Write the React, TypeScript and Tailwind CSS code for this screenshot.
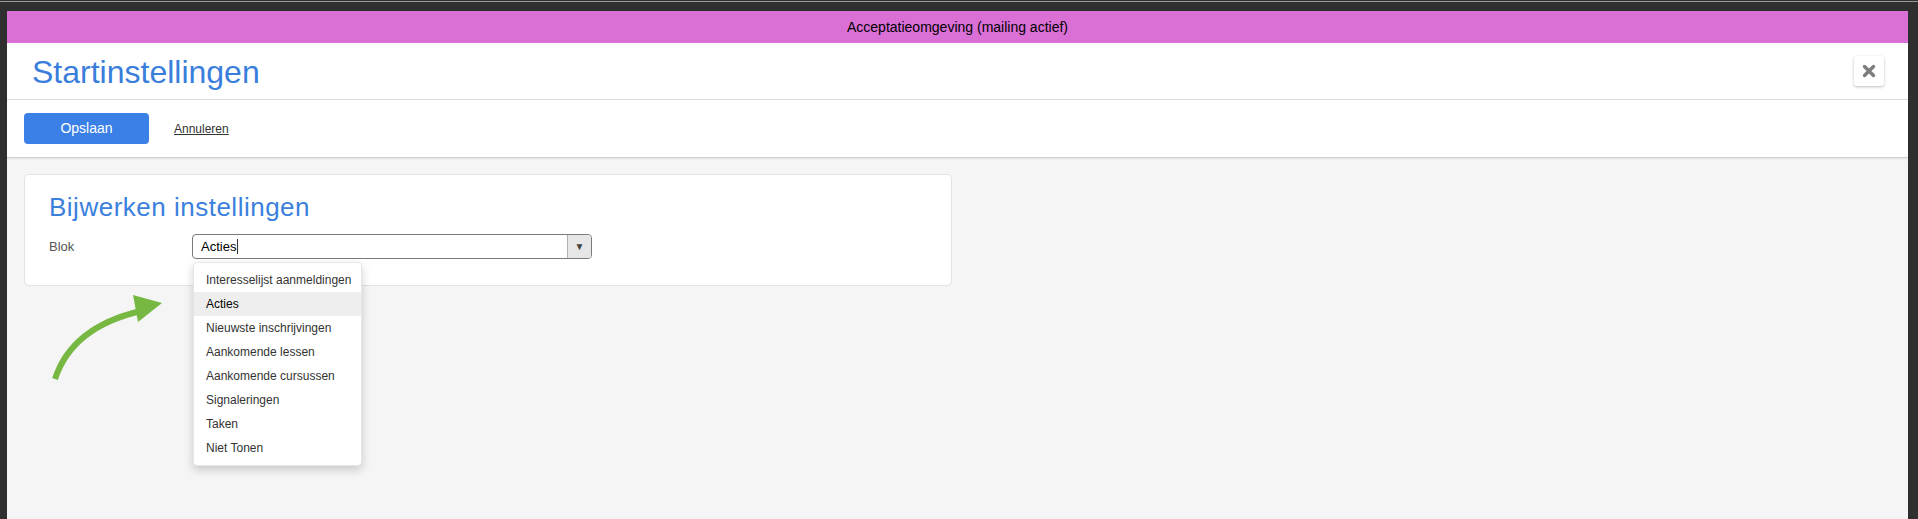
export default function App() {
  const options = [
    "Interesselijst aanmeldingen",
    "Acties",
    "Nieuwste inschrijvingen",
    "Aankomende lessen",
    "Aankomende cursussen",
    "Signaleringen",
    "Taken",
    "Niet Tonen",
  ];
  const selected = "Acties";

  return (
    <div
      className="relative h-[519px] w-full overflow-hidden bg-[#2f2f2f] pt-[1px] pl-[7px] pr-[10px]"
      style={{ fontFamily: '"Liberation Sans", Arial, Helvetica, sans-serif' }}
    >
      {/* top hairline of the window */}
      <div className="-ml-[7px] -mr-[10px] h-[1px] bg-[#9a9a9a]" />

      {/* page frame */}
      <div className="mt-[9px] flex h-[508px] flex-col bg-[#f5f5f5]">
        {/* environment banner */}
        <div className="flex h-[32px] items-center justify-center bg-[#da70d6] text-[14px] text-black">
          Acceptatieomgeving (mailing actief)
        </div>

        {/* header */}
        <div className="flex h-[57px] items-center justify-between border-b border-[#dcdcdc] bg-white pl-[25px] pr-[24px]">
          <h1 className="pt-[2px] text-[32px] leading-none text-[#3a7edc]">
            Startinstellingen
          </h1>
          <button className="flex h-[30px] w-[30px] items-center justify-center rounded-[3px] bg-white shadow-[0_1px_3px_rgba(0,0,0,0.25)]">
            <svg width="14" height="14" viewBox="0 0 14 14">
              <path
                d="M2.5 2.5 L11.5 11.5 M11.5 2.5 L2.5 11.5"
                stroke="#7d7d7d"
                strokeWidth="3.4"
                strokeLinecap="round"
              />
            </svg>
          </button>
        </div>

        {/* toolbar */}
        <div className="flex h-[58px] items-center border-b border-[#d0d0d0] bg-white pl-[17px] shadow-[0_1px_2px_rgba(0,0,0,0.08)]">
          <button className="h-[31px] w-[125px] rounded-[4px] bg-[#3a80e6] text-[14px] text-white">
            Opslaan
          </button>
          <a className="ml-[25px] text-[12px] text-[#333] underline">
            Annuleren
          </a>
        </div>

        {/* content */}
        <div className="flex-1 pl-[17px] pt-[16px]">
          <div className="w-[928px] rounded-[5px] border border-[#e2e2e2] bg-white px-[24px] pt-[19px] pb-[26px]">
            <h2 className="text-[26px] leading-none tracking-[0.5px] text-[#3b80dc]">
              Bijwerken instellingen
            </h2>
            <div className="mt-[14px] flex items-center">
              <label className="w-[143px] text-[13px] text-[#555]">Blok</label>
              <div className="relative">
                <div className="flex h-[25px] w-[400px] overflow-hidden rounded-[4px] border border-[#7a7a7a] bg-white">
                  <div className="flex flex-1 items-center pl-[8px] text-[13px] text-black">
                    {selected}
                    <span className="ml-[1px] inline-block h-[15px] w-[1px] bg-[#333]" />
                  </div>
                  <div className="flex w-[24px] items-center justify-center border-l border-[#b0b0b0] bg-[#e6e6e6] text-[10px] text-[#444]">
                    ▼
                  </div>
                </div>

                {/* open dropdown */}
                <div className="absolute left-[1px] top-[28px] z-10 w-[169px] rounded-[4px] border border-[#e6e6e6] bg-white py-[5px] shadow-[0_4px_10px_rgba(0,0,0,0.18)]">
                  {options.map((opt) => (
                    <div
                      key={opt}
                      className={`flex h-[24px] items-center pl-[12px] text-[12px] ${
                        opt === selected
                          ? "bg-[#eeeeee] text-black"
                          : "text-[#333]"
                      }`}
                    >
                      {opt}
                    </div>
                  ))}
                </div>
              </div>
            </div>
          </div>
        </div>
      </div>

      {/* green annotation arrow */}
      <svg
        className="absolute left-[40px] top-[285px]"
        width="130"
        height="100"
        viewBox="0 0 130 100"
      >
        <path
          d="M15 94 Q32 42 101 26"
          fill="none"
          stroke="#77b843"
          strokeWidth="6"
        />
        <polygon points="93,10 122,18 98,37" fill="#77b843" />
      </svg>
    </div>
  );
}
